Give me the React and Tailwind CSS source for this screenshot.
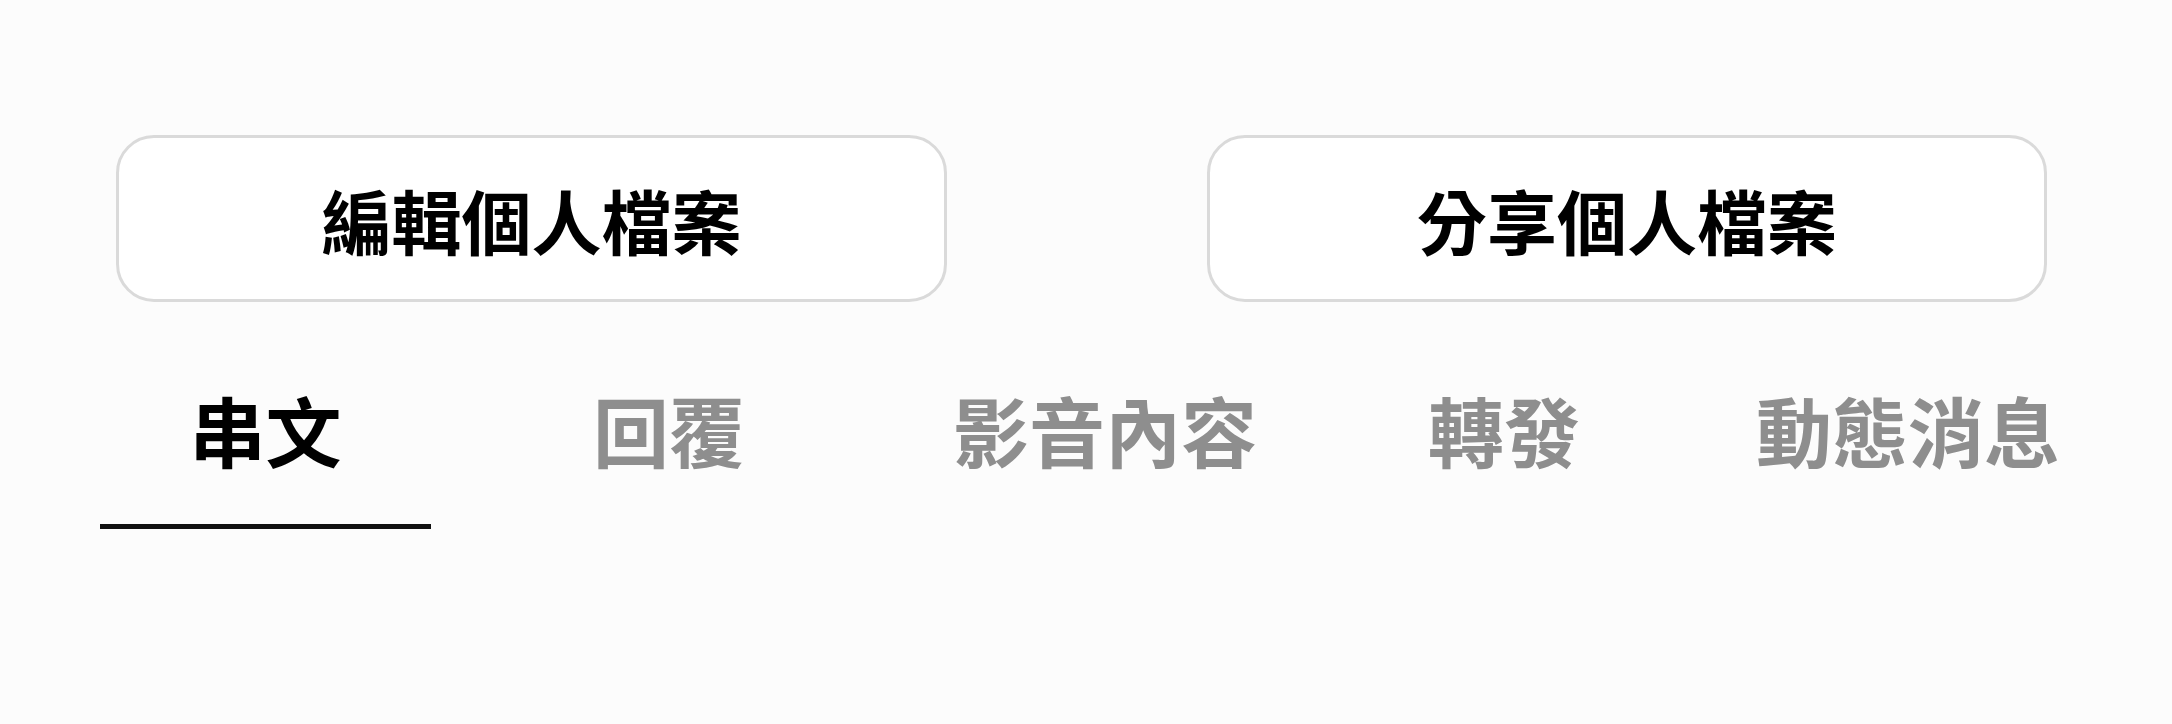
export default function App() {
  const tabs = [
    { label: "串文", w: "w-[331px]", active: true },
    { label: "回覆", w: "w-[476px]" },
    { label: "影音內容", w: "w-[396px]" },
    { label: "轉發", w: "w-[402px]" },
    { label: "動態消息", w: "w-[406px]" },
  ];
  return (
    <div
      className="w-[2172px] h-[724px] bg-[#fcfcfc] overflow-hidden"
      style={{ fontFamily: '"Noto Sans CJK TC", "Noto Sans CJK SC", sans-serif' }}
    >
      <div className="flex pt-[135px] pl-[116px] gap-[260px]">
        <button className="w-[831px] h-[167px] rounded-[38px] border-[3px] border-[#dadada] bg-white flex items-center justify-center text-[70px] leading-none font-bold text-black pt-[3px]">
          編輯個人檔案
        </button>
        <button className="w-[840px] h-[167px] rounded-[38px] border-[3px] border-[#dadada] bg-white flex items-center justify-center text-[70px] leading-none font-bold text-black pt-[3px]">
          分享個人檔案
        </button>
      </div>
      <div className="flex pl-[100px] mt-[89px]">
        {tabs.map((t) => (
          <div key={t.label} className={`${t.w} flex flex-col items-center`}>
            <span
              className={`text-[76px] leading-none h-[76px] font-semibold ${
                t.active ? "text-black" : "text-[#8e8e8e]"
              }`}
            >
              {t.label}
            </span>
            <div
              className={`mt-[57px] h-[5px] w-full ${
                t.active ? "bg-[#111111]" : "bg-transparent"
              }`}
            />
          </div>
        ))}
      </div>
    </div>
  );
}
